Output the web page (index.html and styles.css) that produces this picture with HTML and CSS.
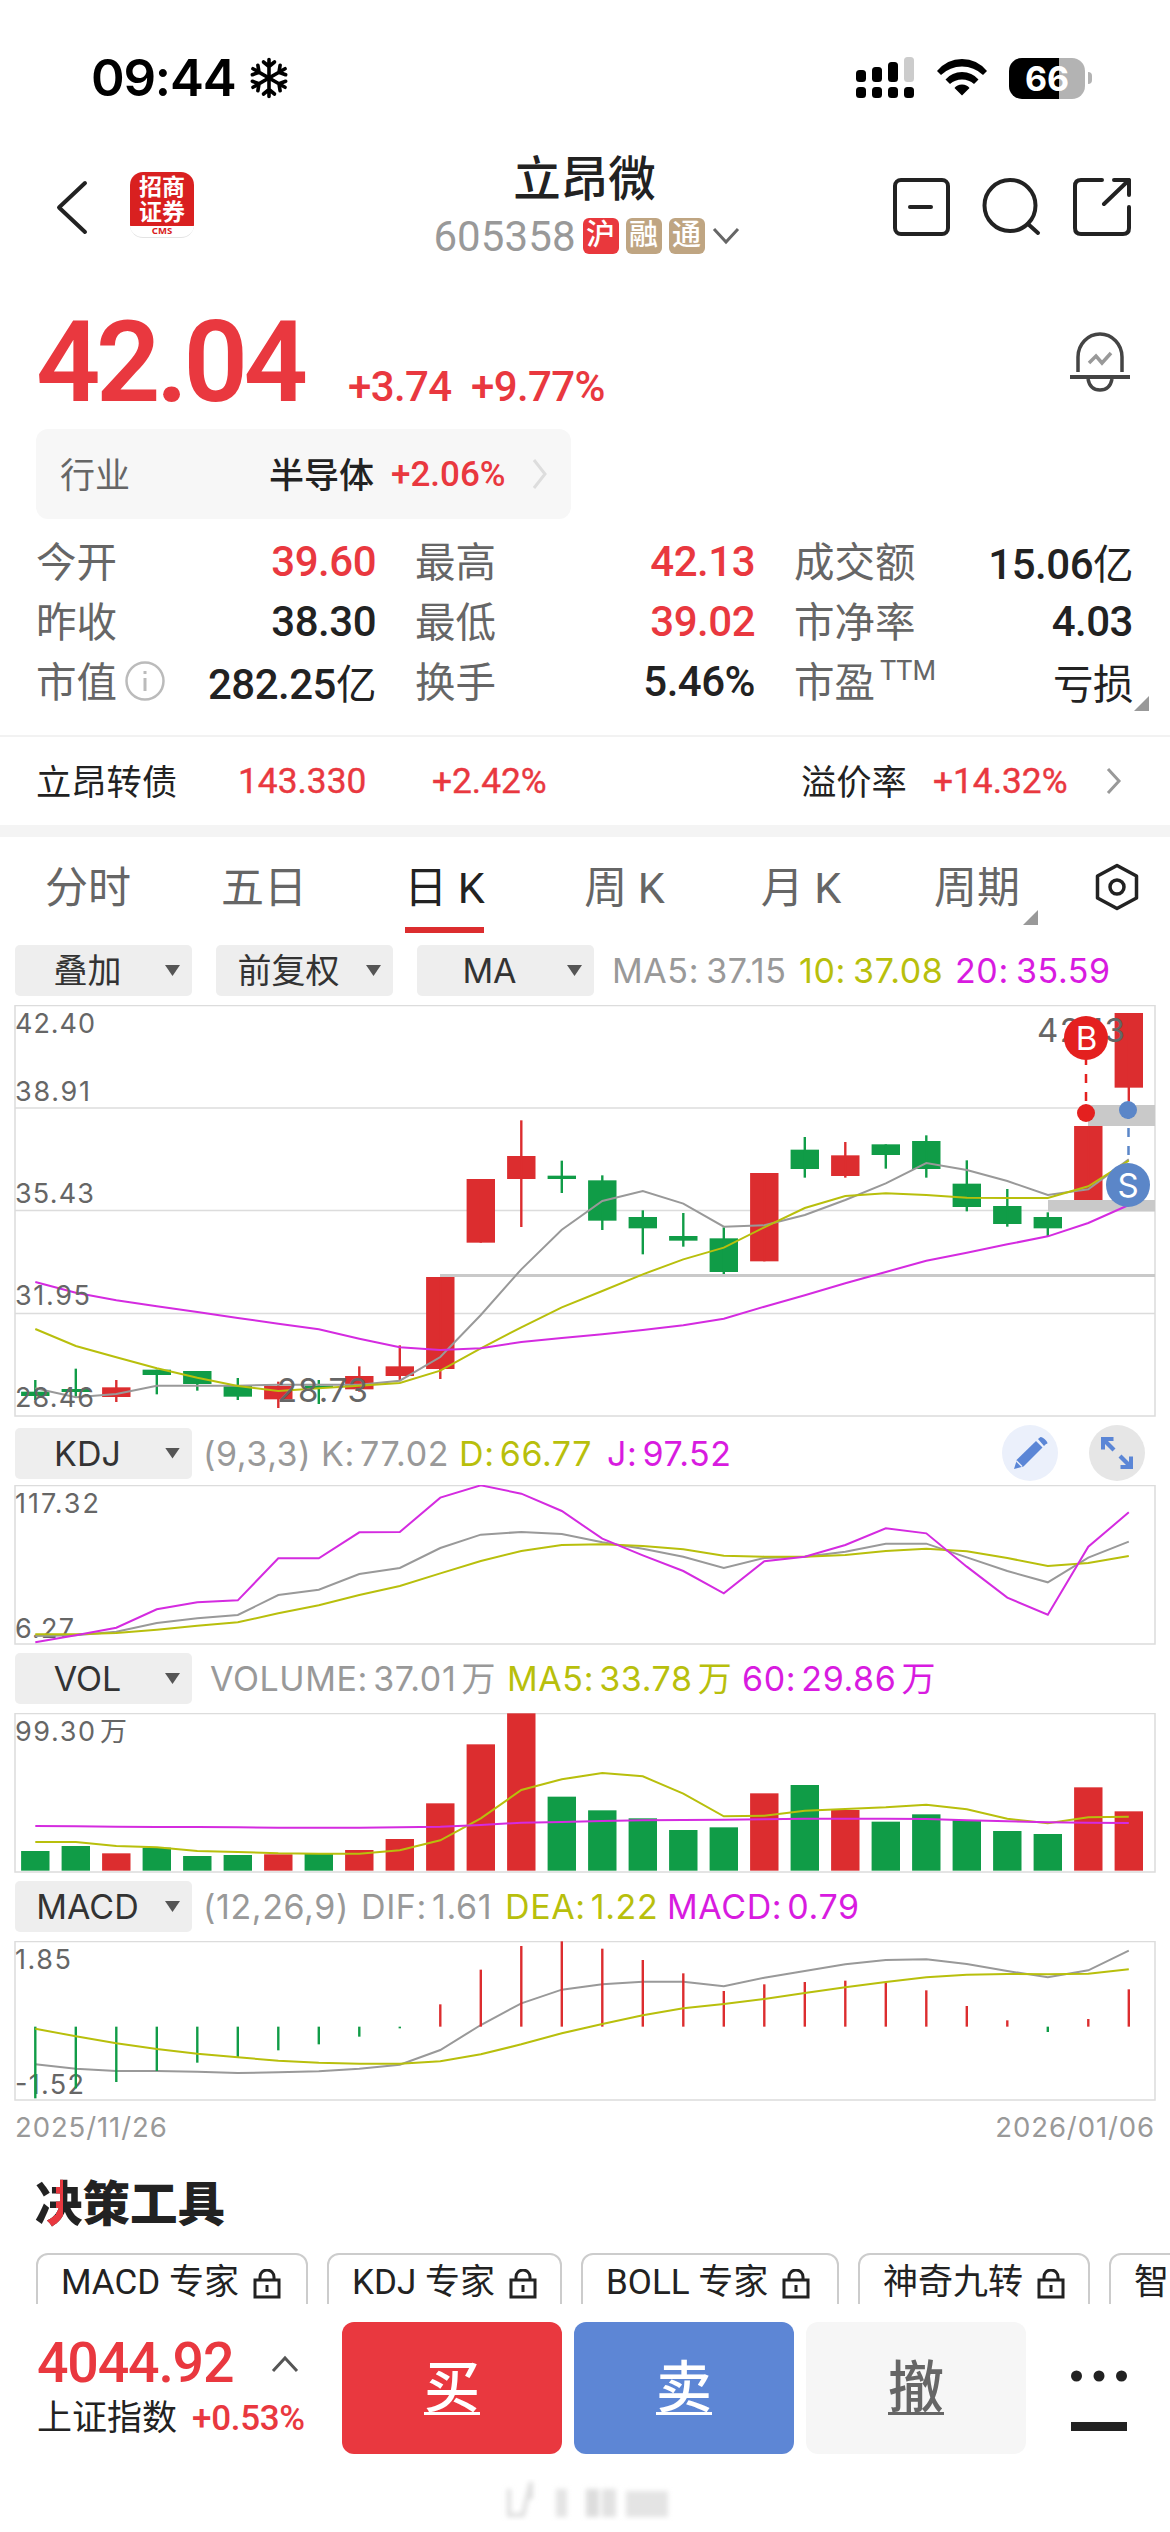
FILE: index.html
```html
<!DOCTYPE html>
<html lang="zh-CN">
<head>
<meta charset="utf-8">
<title>立昂微 605358</title>
<link rel="stylesheet" href="styles.css">
</head>
<body>
<div class="status">
  <div class="clock">09:44</div>
  <svg class="snow" width="40" height="42" viewBox="-20 -21 40 42"><g fill="none" stroke="#000" stroke-width="3.6" stroke-linecap="round" stroke-linejoin="round"><path d="M0-18.500V18.500M-5.500-16 0-11.500 5.500-16M-5.500 16 0 11.500 5.500 16"/><path transform="rotate(60)" d="M0-18.500V18.500M-5.500-16 0-11.500 5.500-16M-5.500 16 0 11.500 5.500 16"/><path transform="rotate(120)" d="M0-18.500V18.500M-5.500-16 0-11.500 5.500-16M-5.500 16 0 11.500 5.500 16"/></g></svg>
  <svg class="signal" width="58" height="42" viewBox="0 0 58 42"><rect x="0" y="13" width="10" height="12" rx="3.500"/><rect x="16" y="10" width="10" height="15" rx="3.500"/><rect x="32" y="5" width="10" height="20" rx="3.500"/><rect x="48" y="0" width="10" height="25" rx="3.500" fill="#ccc"/><rect x="0" y="30" width="10" height="11" rx="3.500"/><rect x="16" y="30" width="10" height="11" rx="3.500"/><rect x="32" y="30" width="10" height="11" rx="3.500"/><rect x="48" y="30" width="10" height="11" rx="3.500"/></svg>
  <svg class="wifi" width="52" height="42" viewBox="0 0 52 42"><path d="M1 14Q11 2 26 2T51 14L47 18Q38 9.500 26 9.500T5 18ZM9.500 22.500Q16 15 26 15T42.500 22.500L38 27Q33 22.500 26 22.500T14 27ZM18.500 31Q21 27.500 26 27.500T33.500 31L26 38.500Z"/></svg>
  <div class="battery"><span>66</span></div><i class="nub"></i>
</div>

<header class="head">
  <svg class="back" width="40" height="60" viewBox="0 0 40 60"><path d="M32 5 6 29.500 32 54" fill="none" stroke="#222" stroke-width="4" stroke-linecap="round" stroke-linejoin="round"/></svg>
  <div class="logo"><b>招商</b><b>证券</b><small>CMS</small></div>
  <div class="title">
    <h1>立昂微</h1>
    <div class="code"><span>605358</span><i class="hu">沪</i><i>融</i><i>通</i><svg width="28" height="18" viewBox="0 0 28 18"><path d="M2 2 14 15 26 2" fill="none" stroke="#666" stroke-width="3"/></svg></div>
  </div>
  <svg class="actions" width="242" height="60" viewBox="-2 0 242 60"><g fill="none" stroke="#222" stroke-width="4" stroke-linecap="round" stroke-linejoin="round"><rect x="4" y="2" width="53" height="54" rx="6"/><path d="M19 29H40"/><circle cx="119" cy="27.500" r="25.500"/><path d="M137 46 147 55"/><path d="M211 2H190Q184 2 184 8V50Q184 56 190 56H232Q238 56 238 50V29M223 2H238V17M238 2 213 26"/></g></svg>
</header>

<section class="quote">
  <span class="price">42.04</span><span class="chg">+3.74</span><span class="chg pct">+9.77%</span>
  <svg width="60" height="60" viewBox="0 0 60 60"><g fill="none" stroke="#444" stroke-width="3.500"><path d="M8 40V25A22 23 0 0 1 52 25V40"/><path d="M0 45H60" stroke-width="4"/><path d="M18 47Q20 58 30 58T42 47"/><path d="M19 31 26 24 32 31 41 21" stroke="#999"/></g></svg>
</section>

<div class="industry"><span class="k">行业</span><span class="n">半导体</span><span class="p">+2.06%</span><svg width="16" height="32" viewBox="0 0 16 32"><path d="M2 2 13 16 2 30" fill="none" stroke="#ddd" stroke-width="3"/></svg></div>

<section class="stats">
  <div><span>今开</span><b class="up">39.60</b></div><div><span>最高</span><b class="up">42.13</b></div><div><span>成交额</span><b>15.06<em>亿</em></b></div>
  <div><span>昨收</span><b>38.30</b></div><div><span>最低</span><b class="up">39.02</b></div><div><span>市净率</span><b>4.03</b></div>
  <div><span>市值</span><svg width="40" height="40" viewBox="0 0 40 40"><circle cx="20" cy="20" r="18.500" fill="none" stroke="#bbb" stroke-width="2.500"/><path d="M20 17V30M20 10V13" stroke="#bbb" stroke-width="3"/></svg><b>282.25<em>亿</em></b></div><div><span>换手</span><b>5.46%</b></div><div><span class="ttm">市盈<sup>TTM</sup></span><b><em>亏损</em></b><i class="corner"></i></div>
</section>

<section class="bond"><span>立昂转债</span><b>143.330</b><b>+2.42%</b><span>溢价率</span><b>+14.32%</b><svg width="16" height="28" viewBox="0 0 16 28"><path d="M2 2 13 14 2 26" fill="none" stroke="#999" stroke-width="3"/></svg></section>

<nav class="tabs">
  <a>分时</a><a>五日</a><a class="on">日 K</a><a>周 K</a><a>月 K</a><a>周期<i class="corner"></i></a>
  <a class="gear"><svg width="44" height="48" viewBox="0 0 44 48"><path d="M22 2.500 41.500 13V35L22 45.500 2.500 35V13Z" fill="none" stroke="#222" stroke-width="3.500" stroke-linejoin="round"/><circle cx="22" cy="24" r="7" fill="none" stroke="#222" stroke-width="3.500"/></svg></a>
</nav>

<div class="legend ma"><button>叠加<i></i></button><button>前复权<i></i></button><button>MA<i></i></button><span>MA5: 37.15</span><span class="y">10: 37.08</span><span class="m">20: 35.59</span></div>
<svg id="kline" class="chart" width="1142" height="412" viewBox="14 1005 1142 412"></svg>

<div class="legend kdj"><button>KDJ<i></i></button><span>(9,3,3)</span><span>K: 77.02</span><span class="y">D: 66.77</span><span class="m">J: 97.52</span>
  <svg width="56" height="56" viewBox="0 0 56 56"><circle cx="28" cy="28" r="28" fill="#ebf0fb"/><g fill="#5b86d6"><path d="M12 44 15 34.500 34 16 40.500 22.500 21.500 41.500Z"/><path d="M36 14 38.500 12Q41 12 44 15.500T44 19L42 21Z"/></g><path d="M14.500 36 20 41.500" stroke="#ebf0fb" stroke-width="1.500"/></svg>
  <svg width="56" height="56" viewBox="0 0 56 56"><circle cx="28" cy="28" r="28" fill="#e6e6e6"/><path d="M12 12H24.500V16H19L26.500 23.500 23.500 26.500 16 19V24.500H12ZM44 44H31.500V40H37L29.500 32.500 32.500 29.500 40 37V31.500H44Z" fill="#5b86d6"/></svg></div>
<svg id="kdj" class="chart" width="1142" height="160" viewBox="14 1485 1142 160"></svg>

<div class="legend vol"><button>VOL<i></i></button><span>VOLUME: 37.01 万</span><span class="y">MA5: 33.78 万</span><span class="m">60: 29.86 万</span></div>
<svg id="vol" class="chart" width="1142" height="160" viewBox="14 1713 1142 160"></svg>

<div class="legend macd"><button>MACD<i></i></button><span>(12,26,9)</span><span>DIF: 1.61</span><span class="y">DEA: 1.22</span><span class="m">MACD: 0.79</span></div>
<svg id="macd" class="chart" width="1142" height="160" viewBox="14 1941 1142 160"></svg>
<div class="dates"><span>2025/11/26</span><span>2026/01/06</span></div>

<h2 class="tools"><span>决</span>策工具</h2>
<div class="chips">
  <div style="width:272px">MACD 专家<svg class="lock" width="28" height="30" viewBox="0 0 28 30"><path d="M2 11H26V28H2ZM7 11V8A7 7 0 0 1 21 8V11M14 16V23"/></svg></div>
  <div style="width:235px">KDJ 专家<svg class="lock" width="28" height="30" viewBox="0 0 28 30"><path d="M2 11H26V28H2ZM7 11V8A7 7 0 0 1 21 8V11M14 16V23"/></svg></div>
  <div style="width:258px">BOLL 专家<svg class="lock" width="28" height="30" viewBox="0 0 28 30"><path d="M2 11H26V28H2ZM7 11V8A7 7 0 0 1 21 8V11M14 16V23"/></svg></div>
  <div style="width:232px">神奇九转<svg class="lock" width="28" height="30" viewBox="0 0 28 30"><path d="M2 11H26V28H2ZM7 11V8A7 7 0 0 1 21 8V11M14 16V23"/></svg></div>
  <div style="width:232px">智</div>
</div>

<footer class="bar">
  <div class="index">
    <div class="top"><b>4044.92</b><svg width="28" height="18" viewBox="0 0 28 18"><path d="M2 16 14 3 26 16" fill="none" stroke="#555" stroke-width="3"/></svg></div>
    <div class="sub"><span>上证指数</span><b>+0.53%</b></div>
  </div>
  <a class="buy">买</a><a class="sell">卖</a><a class="cancel">撤</a>
  <svg class="more" width="56" height="64" viewBox="0 0 56 64"><g fill="#222"><circle cx="5.500" cy="6" r="5.500"/><circle cx="28" cy="6" r="5.500"/><circle cx="50.500" cy="6" r="5.500"/><rect y="52" width="56" height="9"/></g></svg>
</footer>
<svg class="mark" width="180" height="46" viewBox="0 0 180 46"><g filter="url(#soft)"><path d="M9 10V36H23L31 3V20" fill="none" stroke="#ddd" stroke-width="4"/><rect x="56" y="10" width="11" height="28" fill="#e4e4e4"/><rect x="86" y="10" width="13" height="28" fill="#ddd"/><rect x="102" y="10" width="14" height="28" fill="#e2e2e2"/><rect x="126" y="12" width="42" height="26" fill="#e4e4e4"/></g><defs><filter id="soft"><feGaussianBlur stdDeviation="2.500"/></filter></defs></svg>
<script src="script.js"></script>
</body>
</html>
```
FILE: styles.css
```css
* { box-sizing: border-box; }
body { margin: 0; width: 1170px; height: 2532px; overflow: hidden; background: #fff; color: #222; font-family: Roboto, "Noto Sans CJK SC", sans-serif; }
svg { display: block; flex: none; }
b, em, i { font-style: normal; font-weight: 500; }
h1, h2 { margin: 0; font-weight: 500; }
.status { display: flex; align-items: center; height: 152px; padding: 4px 0 0 91px; }
.clock { width: 158px; font: 600 51px/60px Inter, sans-serif; letter-spacing: -1.2px; color: #000; }
.signal { margin-left: 567px; }
.wifi { margin-left: 22px; }
.battery { width: 76px; height: 41px; margin-left: 21px; border-radius: 13px; background: linear-gradient(90deg, #000 66%, #b3b3b3 66%); color: #fff; font: 700 34px/41px Inter, sans-serif; text-align: center; }
.nub { width: 4px; height: 12px; margin-left: 3px; border-radius: 0 6px 6px 0; background: #b3b3b3; }

.head { display: grid; grid-template-columns: 130px 64px 695px 242px; height: 112px; align-items: center; }
.back { margin-left: 53px; }
.logo { display: flex; flex-direction: column; align-items: center; width: 64px; height: 66px; margin-top: -6px; padding-top: 3px; border-radius: 13px; background: linear-gradient(#d92020 54px, #fff 54px); border-bottom: 1px solid #e3e3e3; color: #fff; }
.logo b { font-size: 23px; line-height: 25px; font-weight: 700; }
.logo small { margin-top: 1px; font: 700 9.5px/10px "Noto Sans", sans-serif; color: #d92020; }
.title { display: flex; flex-direction: column; align-items: center; }
.title h1 { margin-left: 86px; font-size: 47.5px; line-height: 56px; }
.code { display: flex; align-items: center; height: 56px; margin-left: 90px; color: #999; font-size: 42px; }
.code span { letter-spacing: 0.1px; margin-right: 7px; }
.code i { width: 36px; height: 36px; margin-right: 7px; border-radius: 6px; background: #bfa582; color: #fff; font-size: 29px; line-height: 35px; text-align: center; }
.code .hu { background: #e9383d; }

.quote { display: flex; align-items: baseline; height: 108px; margin-top: 44px; padding: 0 40px 0 36px; color: #e9383f; font-weight: 500; }
.price { width: 312px; font-size: 113px; line-height: 110px; font-weight: 600; letter-spacing: -4.6px; }
.chg { width: 123px; font-size: 42px; letter-spacing: -0.6px; }
.pct { width: 599px; }
.quote svg { align-self: center; }

.industry { display: flex; align-items: center; width: 535px; height: 90px; margin: 13px 0 0 36px; padding-left: 24px; border-radius: 12px; background: #f7f7f7; font-size: 35px; }
.industry .k { width: 209px; margin-top: -3px; color: #666; }
.industry .n { width: 122px; margin-top: -3px; font-weight: 500; }
.industry .p { width: 141px; color: #e9383f; font-weight: 500; }

.stats { display: grid; grid-template-columns: 340px 340px 339px; grid-auto-rows: 60px; column-gap: 39px; margin: 12px 0 0 36px; width: 1097px; font-size: 42px; }
.stats > div { position: relative; display: flex; align-items: center; }
.stats span { margin-top: -3px; font-size: 40.5px; color: #666; }
.stats b { margin-left: auto; letter-spacing: -0.5px; }
.stats em { font-size: 40.5px; font-weight: 400; }
.up { color: #e9383f; }
.stats svg { margin-left: 8px; }
.ttm sup { font-size: 27px; line-height: 20px; vertical-align: 17px; margin-left: 5px; }
.corner { position: absolute; width: 15px; height: 15px; background: #999; clip-path: polygon(100% 0, 100% 100%, 0 100%); }
.stats .corner { right: -16px; bottom: 0; }

.bond { display: grid; grid-template-columns: 202px 194px 369px 132px 173px 16px; align-items: center; height: 90px; margin-top: 24px; padding-left: 36px; border-top: 2px solid #f2f2f2; font-size: 35.3px; }
.bond span { margin-top: -3px; }
.bond b { color: #e9383f; font-weight: 400; -webkit-text-stroke: 0.4px #e9383f; }

.tabs { display: grid; grid-template-columns: 176px 176px 185px 175px 178px 174px 106px; height: 108px; border-top: 12px solid #f4f4f4; font-size: 43px; color: #666; }
.tabs a { position: relative; display: flex; justify-content: center; height: 96px; line-height: 102px; white-space: pre; }
.tabs .on { color: #222; }
.tabs .on::after { content: ""; position: absolute; bottom: 0; left: 53px; width: 79px; height: 6px; background: #dc2d2f; }
.tabs .corner { right: 26px; bottom: 8px; }
.gear svg { margin-top: 26px; }

.legend { display: grid; align-items: center; height: 51px; margin: 8px 0 9px; padding-left: 15px; font: 400 34px/51px Inter, "Noto Sans CJK SC", sans-serif; color: #999; white-space: nowrap; word-spacing: -5px; letter-spacing: 0.6px; }
.ma { margin: 12px 0 9px; grid-template-columns: 201px 201px 195px 187px 156px 1fr; word-spacing: -3px; }
.kdj { grid-template-columns: 188px 118px 138px 148px 395px 87px 56px; }
.vol { grid-template-columns: 195px 297px 235px 1fr; }
.macd { grid-template-columns: 188px 158px 144px 162px 1fr; }
.legend button { position: relative; width: 177px; height: 51px; padding: 0 32px 0 0; border: 0; border-radius: 5px; background: #eee; color: #333; font: 400 34px/51px Inter, "Noto Sans CJK SC", sans-serif; }
.legend button i { position: absolute; right: 12px; top: 20px; width: 15px; height: 11px; background: #555; clip-path: polygon(0 0, 100% 0, 50% 100%); }
.y { color: #b8bf0c; }
.m { color: #d81be0; }

.chart { margin-left: 14px; font-family: Inter, "Noto Sans CJK SC", sans-serif; }
.dates { display: flex; justify-content: space-between; height: 52px; padding: 0 15px; font: 400 27.5px/52px Inter, sans-serif; letter-spacing: 0.9px; color: #999; }

.tools { height: 100px; padding-left: 35px; font-size: 47.5px; line-height: 105px; font-weight: 900; }
.tools span { background: linear-gradient(#e9383f, #e9383f) 21px 0 / 7px 100% no-repeat, linear-gradient(#e9383f, #e9383f) 11px 38px / 11px 40px no-repeat, #222; -webkit-background-clip: text; background-clip: text; color: transparent; }
.chips { display: flex; gap: 19px; height: 51px; padding-left: 36px; overflow: hidden; font: 400 35px/56px Roboto, "Noto Sans CJK SC", sans-serif; white-space: nowrap; }
.chips div { display: flex; flex: none; height: 72px; padding-left: 23px; border: 2px solid #ccc; border-radius: 12px; }
.lock { margin: 14px 0 0 14px; fill: none; stroke: #222; stroke-width: 3; }

.bar { display: flex; height: 150px; padding: 18px 0 0 37px; }
.index { width: 305px; }
.top { display: flex; height: 76px; align-items: center; padding-top: 7px; color: #e9383f; }
.top b { width: 234px; font-size: 55.5px; letter-spacing: -1.2px; }
.sub { display: flex; font-size: 35px; line-height: 42px; }
.sub span { width: 155px; }
.sub b { color: #e9383f; letter-spacing: -0.3px; }
.bar a { width: 220px; height: 132px; margin-right: 12px; border-radius: 12px; font-size: 56px; font-weight: 500; line-height: 132px; text-align: center; text-decoration: underline; text-decoration-thickness: 3px; text-underline-offset: 5px; color: #fff; }
.bar .buy { background: #e9383f; }
.bar .sell { background: #5d86d5; }
.bar .cancel { background: #f6f6f6; color: #666; }
.more { margin: 48px 0 0 33px; }
.mark { margin: 25px 0 0 500px; }
```
FILE: script.js
```js
const RED = '#dc2d2f', GREEN = '#109c47', GRAY = '#999', YELLOW = '#b8bf0c', PINK = '#d42be0';
const X0 = 35.3, STEP = 40.5;
const cx = i => X0 + i * STEP;

const rect = (x, y, w, h, fill) => `<rect x="${x}" y="${y}" width="${w}" height="${h}" fill="${fill}"/>`;
const line = (x1, y1, x2, y2, c, w, extra = '') => `<path d="M${x1} ${y1}L${x2} ${y2}" stroke="${c}" stroke-width="${w}" fill="none" ${extra}/>`;
const curve = (vals, base, c) => `<polyline points="${vals.map((v, i) => cx(i) + ',' + (base + v / 3)).join(' ')}" fill="none" stroke="${c}" stroke-width="2"/>`;
const label = (s, x, y, len, size = 27) => `<text x="${x}" y="${y}" font-size="${size}" textLength="${len}" fill="#666">${s}</text>`;
const frame = (top, bottom) => `<path d="M15 ${top + 0.5}H1155V${bottom - 0.5}H15Z" fill="none" stroke="#dcdcdc" stroke-width="1.5"/>`;
const draw = (id, parts) => { document.getElementById(id).innerHTML = parts.join(''); };

// [colour, body top, body bottom, wick top, wick bottom]
const candles = [
  ['g',1205,1218,1170,1230],['g',1197,1206,1136,1222],['r',1192,1221,1170,1236],['g',1139,1155,1139,1213],
  ['g',1143,1182,1143,1202],['g',1188,1220,1164,1230],['r',1188,1228,1175,1254],['g',1187,1194,1170,1242],
  ['r',1158,1198,1129,1205],['r',1129,1158,1066,1170],['r',861,1137,861,1167],['r',567,758,567,758],
  ['r',498,567,391,711],['g',557,567,512,609],['g',571,692,556,720],['g',681,715,661,793],
  ['g',738,752,669,770],['g',745,846,712,852],['r',549,814,549,814],['g',479,537,441,563],
  ['r',496,558,456,563],['g',463,495,463,536],['g',453,537,436,563],['g',581,651,511,664],
  ['g',648,702,597,710],['g',681,715,667,740],['r',408,630,408,630],['r',69,293,69,335]
];
const ky = v => 990 + v / 3;
draw('kline', [
  frame(1005, 1416.5),
  ...[1108, 1210.5, 1313.5].map(y => line(15, y, 1155, y, '#dcdcdc', 1.5)),
  line(440, 1275.5, 1155, 1275.5, '#c9c9c9', 3),
  rect(1088, 1105, 67, 21, '#c9c9c9'), rect(1048, 1200, 107, 11.5, '#c9c9c9'),
  ...candles.map(([k, a, b, c, d], i) => {
    const col = k === 'r' ? RED : GREEN;
    return rect(cx(i) - 14.2, ky(a), 28.4, (b - a) / 3, col) + line(cx(i), ky(c), cx(i), ky(d), col, 2.4);
  }),
  curve([1195,1222,1212,1187,1187,1187,1184,1184,1184,1172,1101,975,838,719,633,603,641,710,706,675,630,580,519,540,573,615,598,508], 990, GRAY),
  curve([1017,1068,1102,1135,1163,1188,1203,1195,1187,1179,1142,1075,1012,952,903,853,808,773,712,654,618,610,615,623,624,624,589,512], 990, YELLOW),
  curve([876,908,931,949,966,984,1001,1018,1046,1072,1080,1075,1056,1044,1033,1020,1006,986,950,916,880,846,812,788,763,739,699,645], 990, PINK),
  label('42.40', 15, 1033, 80), label('38.91', 15, 1101, 75), label('35.43', 15, 1203, 79),
  label('31.95', 15, 1305, 75), label('28.46', 15, 1407, 79),
  label('28.73', 277, 1401.5, 91, 33), label('42.13', 1037, 1042, 88, 33),
  line(1086, 1058, 1086, 1110, '#e4201f', 2.5, 'stroke-dasharray="9 9" stroke-dashoffset="2"'),
  '<circle cx="1086" cy="1038" r="22" fill="#e4201f"/><circle cx="1086" cy="1113" r="9" fill="#e4201f"/>',
  line(1128.5, 1110, 1128.5, 1165, '#5b86c8', 2.5, 'stroke-dasharray="9 9"'),
  '<circle cx="1128" cy="1185" r="22" fill="#5b86c8"/><circle cx="1128" cy="1110" r="9" fill="#5b86c8"/>',
  '<text x="1086.5" y="1050" font-size="33" text-anchor="middle" fill="#fff">B</text><text x="1128" y="1197" font-size="33" text-anchor="middle" fill="#fff">S</text>'
]);

draw('kdj', [
  frame(1485, 1644.5),
  label('117.32', 15, 1512.5, 84), label('6.27', 15, 1637.5, 59),
  curve([678,676,665,639,625,615,555,539,492,474,414,374,366,372,397,416,440,474,444,440,425,401,401,442,483,517,443,395], 1410, GRAY),
  curve([673,673,669,659,647,637,610,586,555,528,490,453,423,405,403,408,418,437,440,440,435,423,416,424,444,468,459,438], 1410, YELLOW),
  curve([697,676,653,598,577,571,445,445,367,366,263,226,251,303,386,436,483,550,454,440,405,355,370,470,563,614,410,307], 1410, PINK)
]);

const volume = [453,438,460,443,468,465,463,462,450,417,310,133,40,290,331,355,390,382,280,255,330,365,343,360,393,402,262,334];
const volRed = new Set([2, 6, 8, 9, 10, 11, 12, 18, 20, 26, 27]);
draw('vol', [
  frame(1713, 1872.5),
  ...volume.map((v, i) => rect(cx(i) - 14.2, 1700 + v / 3, 28.4, (512 - v) / 3, volRed.has(i) ? RED : GREEN)),
  `<text y="1741" font-size="27" fill="#666"><tspan x="15" textLength="80">99.30</tspan><tspan x="100">万</tspan></text>`,
  curve([426,426,438,442,453,456,460,461,461,451,421,355,270,238,219,229,281,349,347,332,327,322,314,328,356,370,352,350], 1700, YELLOW),
  curve([378,379,380,381,381,382,383,383,383,382,380,375,368,366,363,361,360,359,358,356,356,356,357,361,364,367,368,369], 1700, PINK)
]);

const hist = [595,565,546,513,488,473,451,433,410,385,313,209,138,124,146,180,220,273,253,246,242,248,271,318,361,396,357,268];
draw('macd', [
  frame(1941, 2100.5),
  curve([493,506,513,513,515,519,517,514,506,494,450,375,310,269,253,245,245,259,233,213,193,180,178,192,213,232,211,152], 1900, GRAY),
  label('1.85', 15, 1968.5, 56), label('-1.52', 15, 2093.5, 69),
  ...hist.map((v, i) => line(cx(i), 1900 + 380 / 3, cx(i), 1900 + v / 3, v < 380 ? RED : GREEN, 2.4)),
  curve([386,409,430,447,461,472,482,488,491,491,484,463,433,400,372,346,325,312,297,279,262,246,232,224,222,223,221,208], 1900, YELLOW)
]);
```
